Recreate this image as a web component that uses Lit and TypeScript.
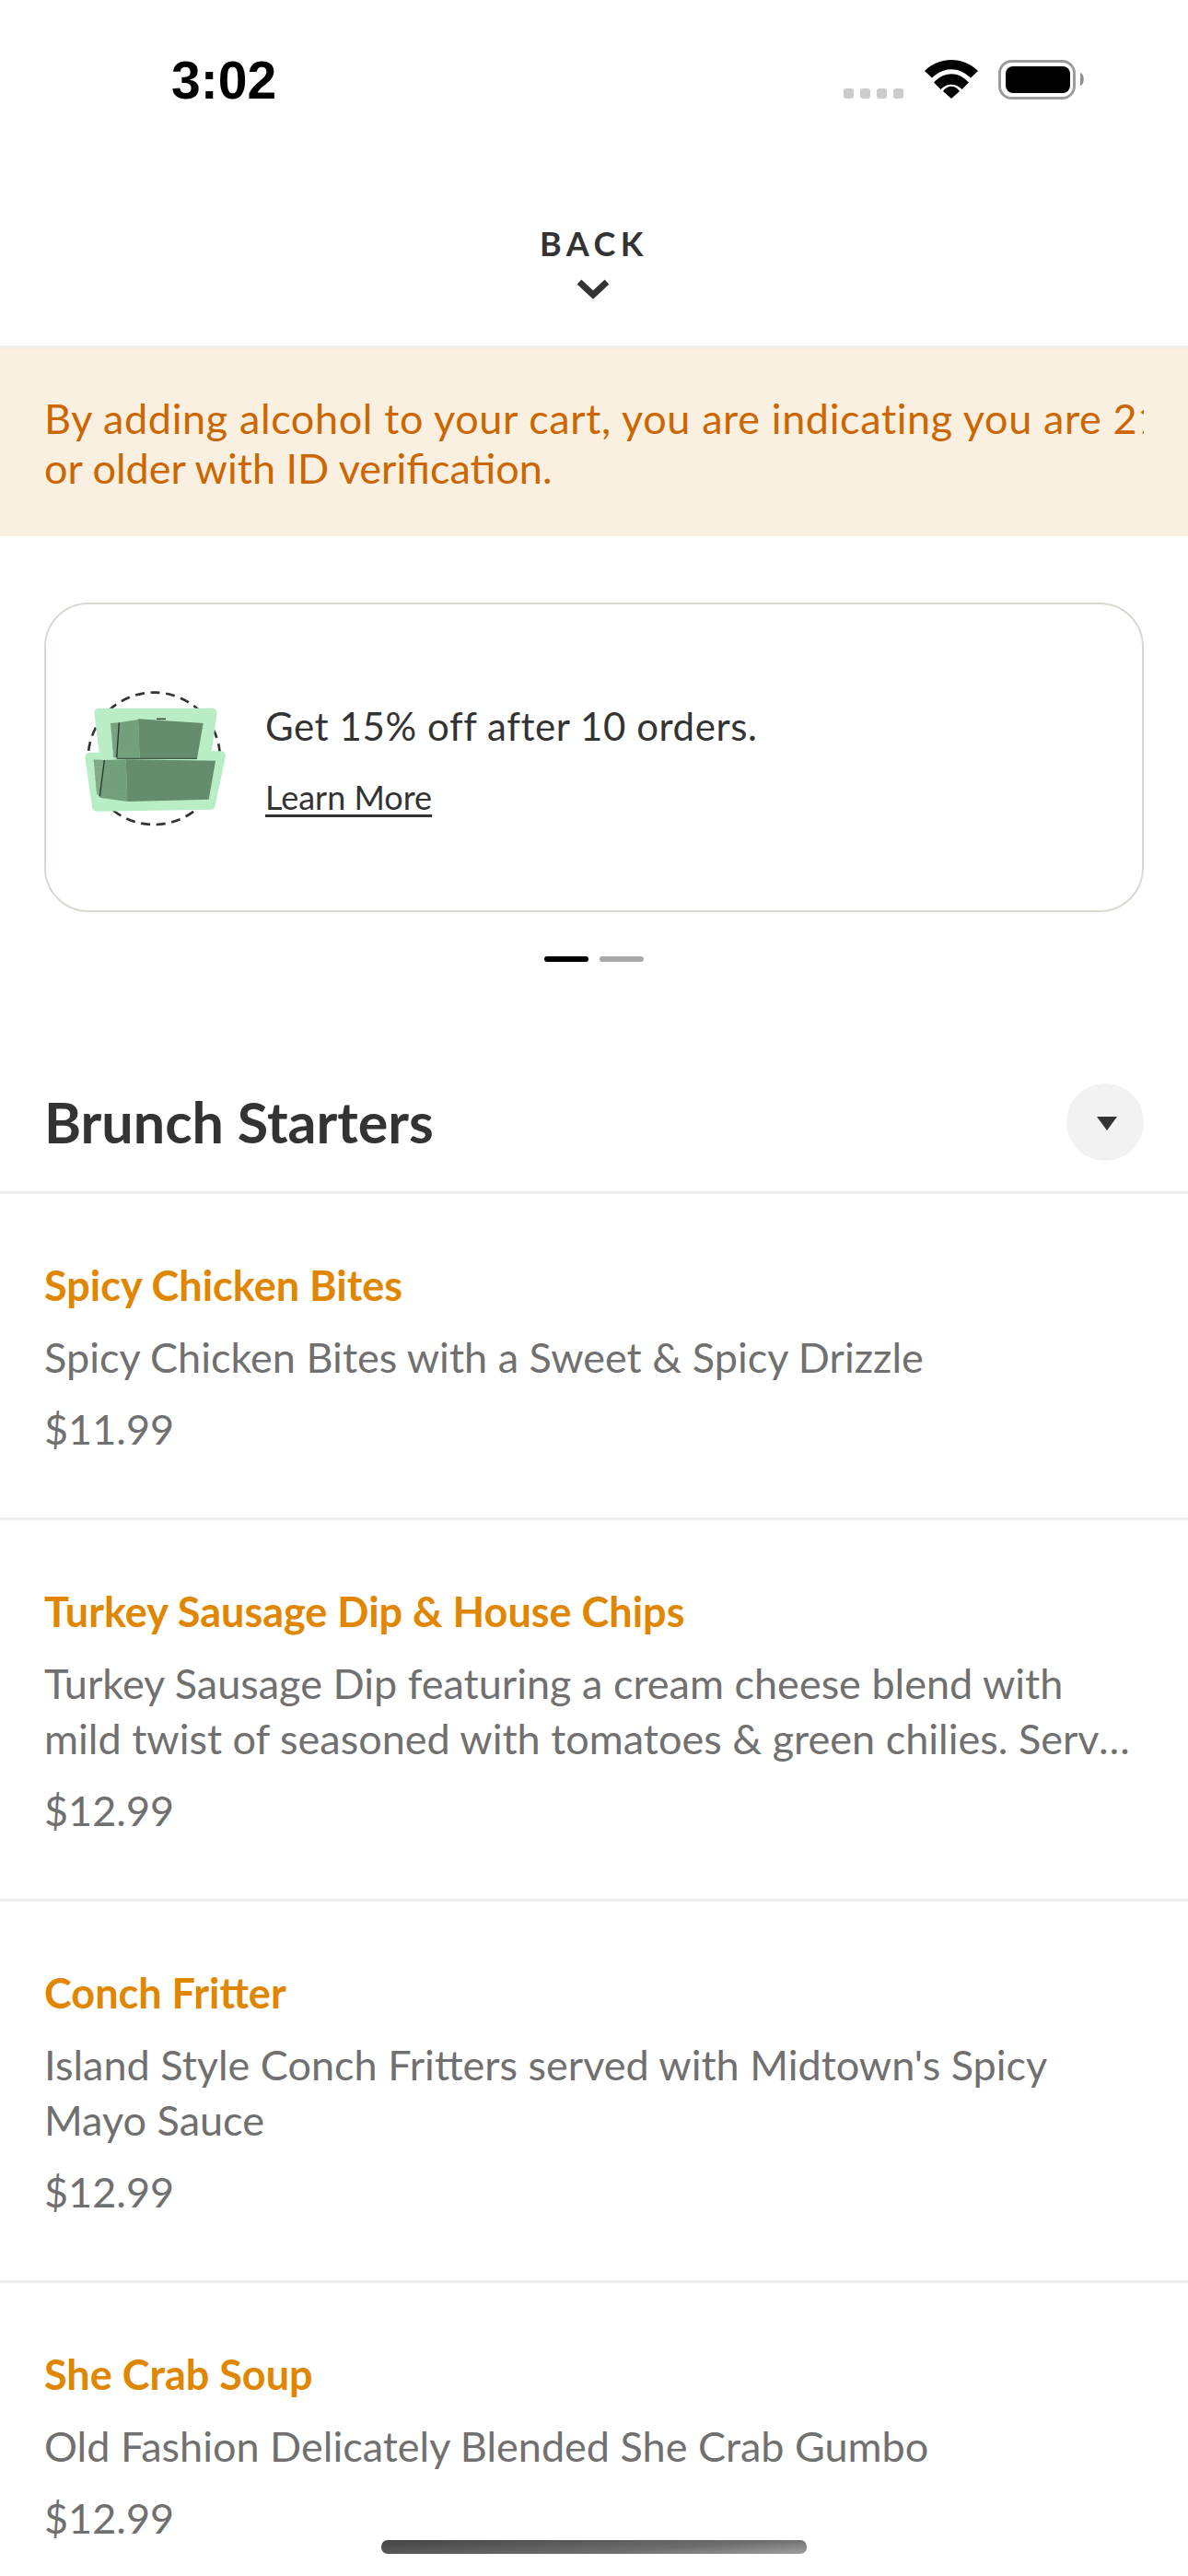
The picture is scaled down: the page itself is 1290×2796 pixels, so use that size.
import { LitElement, html, css, svg } from 'lit';
import { customElement } from 'lit/decorators.js';

const items = [
  { name: 'Spicy Chicken Bites', desc: 'Spicy Chicken Bites with a Sweet & Spicy Drizzle', price: '$11.99' },
  {
    name: 'Turkey Sausage Dip & House Chips',
    desc: 'Turkey Sausage Dip featuring a cream cheese blend with mild twist of seasoned with tomatoes & green chilies. Served with house made chips.',
    price: '$12.99',
  },
  { name: 'Conch Fritter', desc: "Island Style Conch Fritters served with Midtown's Spicy Mayo Sauce", price: '$12.99' },
  { name: 'She Crab Soup', desc: 'Old Fashion Delicately Blended She Crab Gumbo', price: '$12.99' },
];

const boxes = svg`
  <defs>
    <filter id="grain" x="0" y="0" width="100%" height="100%">
      <feTurbulence type="fractalNoise" baseFrequency="0.3" numOctaves="2" seed="4" result="n" />
      <feColorMatrix in="n" type="matrix" values="0 0 0 0 0.15  0 0 0 0 0.25  0 0 0 0 0.17  0 0 0 1.300 -0.550" result="s" />
      <feComposite in="s" in2="SourceGraphic" operator="in" result="c" />
      <feMerge><feMergeNode in="SourceGraphic" /><feMergeNode in="c" /></feMerge>
    </filter>
  </defs>
  <circle cx="412" cy="545" r="215" fill="none" stroke="#333" stroke-width="8" stroke-dasharray="30 20" />
  <path d="M232 396H602L582 536H630L596 696L225 702L202 540H250Z" fill="#b9edc6" stroke="#b9edc6" stroke-width="30" stroke-linejoin="round" />
  <g filter="url(#grain)">
    <path d="M270 430L298 428L290 542H280Z" fill="#7ba583" />
    <path d="M298 428L360 418L365 545H290Z" fill="#74a37e" />
    <path d="M360 416L572 430L552 545H365Z" fill="#638d6c" />
    <path d="M215 548L250 550L235 668L225 660Z" fill="#83ae8b" />
    <path d="M250 550L320 548L325 685L235 672Z" fill="#74a37e" />
    <path d="M320 548L612 552L590 678L325 685Z" fill="#638d6c" />
  </g>
  <path d="M298 428L290 542M250 550L235 668" stroke="#26352a" stroke-width="4" fill="none" />
  <path d="M290 545H552" stroke="#3f5c46" stroke-width="4" fill="none" />
  <path d="M420 416H450" stroke="#26352a" stroke-width="4" fill="none" />
`;

@customElement('app-root')
export class AppRoot extends LitElement {
  static styles = css`
    :host {
      display: block;
      position: relative;
      width: 1290px;
      height: 2796px;
      overflow: hidden;
      background: #fff;
      font-family: Lato, 'Open Sans', sans-serif;
      color: #333;
    }
    .status {
      height: 130px;
      display: flex;
      justify-content: space-between;
      align-items: flex-start;
      padding: 0 108px 0 186px;
    }
    .time {
      margin-top: 57px;
      font: 700 57px/60px 'Liberation Sans', sans-serif;
      color: #000;
    }
    .status-icons {
      margin-top: 60px;
    }
    .back {
      box-sizing: border-box;
      height: 247px;
      display: flex;
      flex-direction: column;
      align-items: center;
      border-bottom: 2px solid #eeeeee;
    }
    .back span {
      margin-top: 112px;
      font-weight: 700;
      font-size: 36px;
      line-height: 44px;
      letter-spacing: 5.500px;
    }
    .back svg {
      margin-top: 15px;
      margin-left: -3px;
    }
    .notice {
      height: 205px;
      box-sizing: border-box;
      background: #f9f0e1;
      color: #cc6600;
      padding: 50px 48px 0;
      font-size: 45px;
      line-height: 54px;
    }
    .notice div {
      white-space: nowrap;
      overflow: hidden;
    }
    .notice .wide {
      letter-spacing: 0.620px;
    }
    .promo {
      margin: 72px 48px 0;
      height: 336px;
      box-sizing: border-box;
      border: 2px solid #d9d9d2;
      border-radius: 48px;
      display: flex;
      align-items: center;
      padding-left: 35px;
      gap: 38px;
    }
    .promo-text {
      display: flex;
      flex-direction: column;
      gap: 30px;
      padding-top: 5px;
    }
    .promo-title {
      font-size: 42px;
      letter-spacing: 0.570px;
      line-height: 50px;
    }
    .promo-link {
      font-size: 36px;
      line-height: 44px;
      text-decoration: underline;
      text-underline-offset: 5px;
    }
    .dots {
      display: flex;
      justify-content: center;
      gap: 12px;
      margin-top: 48px;
    }
    .dots i {
      width: 48px;
      height: 6px;
      border-radius: 3px;
      background: #a8a8a8;
    }
    .dots i.on {
      background: #000;
    }
    .section {
      margin-top: 132px;
      display: flex;
      justify-content: space-between;
      align-items: center;
      padding: 0 48px 33px;
      border-bottom: 3px solid #eeeeee;
    }
    .section h2 {
      margin: 0;
      font-size: 61px;
      line-height: 84px;
      font-weight: 700;
    }
    .toggle {
      width: 84px;
      height: 84px;
      border-radius: 50%;
      background: #f2f2f2;
      display: flex;
      align-items: center;
      justify-content: center;
    }
    .toggle svg {
      margin: 3px 0 0 3px;
    }
    .item {
      padding: 69px 48px 0;
      border-bottom: 3px solid #eeeeee;
    }
    .item-name {
      color: #e08600;
      font-weight: 700;
      font-size: 45px;
      line-height: 60px;
    }
    .item-desc {
      margin-top: 18px;
      color: #707070;
      font-size: 45px;
      line-height: 60px;
      display: -webkit-box;
      -webkit-box-orient: vertical;
      -webkit-line-clamp: 2;
      overflow: hidden;
    }
    .item-price {
      margin-top: 18px;
      padding-bottom: 66px;
      color: #707070;
      font-size: 45px;
      line-height: 60px;
    }
    .home {
      position: absolute;
      left: 414px;
      top: 2757px;
      width: 462px;
      height: 15px;
      border-radius: 7px;
      background: linear-gradient(176deg, #444444, #6e6e6e 65%, #a0a0a0);
    }
  `;

  render() {
    return html`
      <div class="status">
        <div class="time">3:02</div>
        <svg class="status-icons" width="266" height="50" viewBox="0 0 266 50">
          <g fill="#cccccc">
            <rect x="0" y="36" width="11" height="11" rx="3" />
            <rect x="18" y="36" width="11" height="11" rx="3" />
            <rect x="36" y="36" width="11" height="11" rx="3" />
            <rect x="54" y="36" width="11" height="11" rx="3" />
          </g>
          <path d="M88 17C104 1 130 1 146 17L138 24.500C125 12 109 12 96 24.500Z" fill="#000" />
          <path d="M98 29.500C109 17 125 17 136 29.500L128.500 37C122 30 112 30 105.500 37Z" fill="#000" />
          <path d="M108 39C113 32 121 32 126 39L117 47Z" fill="#000" />
          <rect x="169.500" y="6.500" width="81" height="40" rx="13" fill="none" stroke="#9c9c9c" stroke-width="3" />
          <rect x="176" y="12" width="70" height="29" rx="8" fill="#000" />
          <path d="M257 19C262 20 262 32 257 33Z" fill="#8f8f8f" />
        </svg>
      </div>
      <div class="back">
        <span>BACK</span>
        <svg width="36" height="24" viewBox="0 0 36 24">
          <path d="M3 5L18 19L33 5" fill="none" stroke="#333" stroke-width="7" />
        </svg>
      </div>
      <div class="notice">
        <div class="wide">By adding alcohol to your cart, you are indicating you are 21</div>
        <div>or older with ID verification.</div>
      </div>
      <div class="promo">
        <svg width="165" height="155" viewBox="165 310 495 465">${boxes}</svg>
        <div class="promo-text">
          <div class="promo-title">Get 15% off after 10 orders.</div>
          <div class="promo-link">Learn More</div>
        </div>
      </div>
      <div class="dots"><i class="on"></i><i></i></div>
      <div class="section">
        <h2>Brunch Starters</h2>
        <div class="toggle">
          <svg width="22" height="16" viewBox="0 0 22 16"><path d="M0 0H22L11 15Z" fill="#333" /></svg>
        </div>
      </div>
      ${items.map(
        (item) => html`
          <div class="item">
            <div class="item-name">${item.name}</div>
            <div class="item-desc">${item.desc}</div>
            <div class="item-price">${item.price}</div>
          </div>
        `
      )}
      <div class="home"></div>
    `;
  }
}
